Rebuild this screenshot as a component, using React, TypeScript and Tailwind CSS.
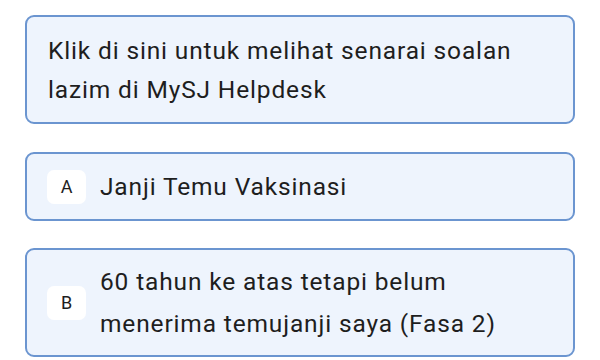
export default function App() {
  const font = { fontFamily: 'Roboto, "Noto Sans", sans-serif' };
  return (
    <div className="w-[600px] h-[360px] bg-white pl-[25px] pt-[15px] flex flex-col gap-[28px]" style={font}>
      <div className="w-[550px] h-[109px] rounded-[9px] border-2 border-[#6b95d0] bg-[#eef4fd] pl-[21px] pr-4 flex items-center">
        <p className="text-[24.5px] tracking-[0.85px] leading-[39px] text-[#1e1e1e]">
          Klik di sini untuk melihat senarai soalan
          <br />
          lazim di MySJ Helpdesk
        </p>
      </div>
      <div className="w-[550px] h-[69px] rounded-[9px] border-2 border-[#6b95d0] bg-[#eef4fd] pl-[20px] flex items-center gap-[14px]">
        <span className="w-[39px] h-[34px] rounded-[7px] bg-white flex items-center justify-center text-[18px] text-[#1e1e1e]">
          A
        </span>
        <p className="text-[24.5px] tracking-[0.85px] leading-[40px] text-[#1e1e1e]">Janji Temu Vaksinasi</p>
      </div>
      <div className="w-[550px] h-[109px] rounded-[9px] border-2 border-[#6b95d0] bg-[#eef4fd] pl-[20px] flex items-center gap-[14px] -mt-px">
        <span className="w-[39px] h-[34px] rounded-[7px] bg-white flex items-center justify-center text-[18px] text-[#1e1e1e]">
          B
        </span>
        <p className="text-[24.5px] tracking-[0.85px] leading-[42px] text-[#1e1e1e]">
          60 tahun ke atas tetapi belum
          <br />
          menerima temujanji saya (Fasa 2)
        </p>
      </div>
    </div>
  );
}
